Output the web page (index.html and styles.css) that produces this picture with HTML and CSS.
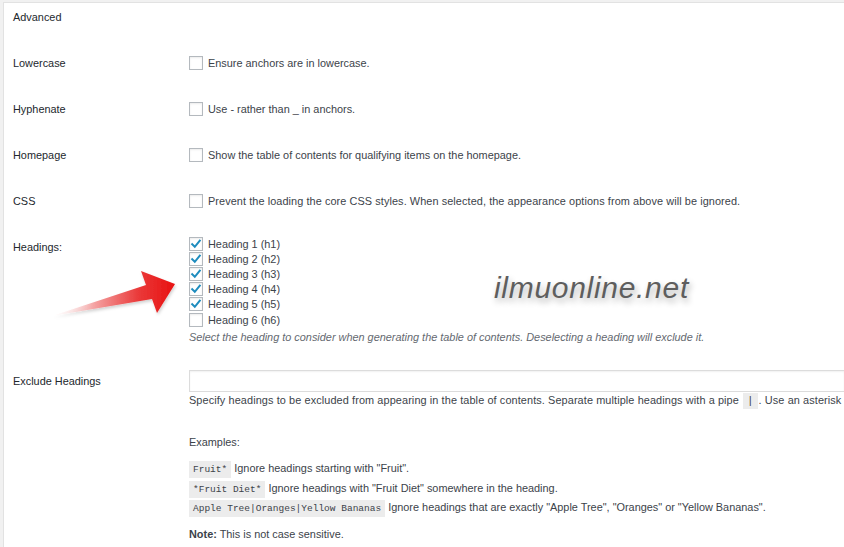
FILE: index.html
```html
<!DOCTYPE html>
<html lang="en">
<head>
<meta charset="utf-8">
<title>Advanced settings</title>
<link rel="stylesheet" href="styles.css">
</head>
<body>
<div class="box">
  <div class="section-title">Advanced</div>

  <div class="row">
    <div class="label">Lowercase</div>
    <div class="field"><span class="cb"></span><span>Ensure anchors are in lowercase.</span></div>
  </div>
  <div class="row">
    <div class="label">Hyphenate</div>
    <div class="field"><span class="cb"></span><span>Use - rather than _ in anchors.</span></div>
  </div>
  <div class="row">
    <div class="label">Homepage</div>
    <div class="field"><span class="cb"></span><span>Show the table of contents for qualifying items on the homepage.</span></div>
  </div>
  <div class="row">
    <div class="label">CSS</div>
    <div class="field"><span class="cb"></span><span class="wide">Prevent the loading the core CSS styles. When selected, the appearance options from above will be ignored.</span></div>
  </div>

  <div class="row-headings">
    <div class="label label-headings">Headings:</div>
    <div class="field-col">
      <ul class="heading-list">
        <li><span class="cb cb-small checked"><svg viewBox="0 0 12 12"><path d="M2.2 6.2 L4.8 8.8 L9.8 2.6" /></svg></span>Heading 1 (h1)</li>
        <li><span class="cb cb-small checked"><svg viewBox="0 0 12 12"><path d="M2.2 6.2 L4.8 8.8 L9.8 2.6" /></svg></span>Heading 2 (h2)</li>
        <li><span class="cb cb-small checked"><svg viewBox="0 0 12 12"><path d="M2.2 6.2 L4.8 8.8 L9.8 2.6" /></svg></span>Heading 3 (h3)</li>
        <li><span class="cb cb-small checked"><svg viewBox="0 0 12 12"><path d="M2.2 6.2 L4.8 8.8 L9.8 2.6" /></svg></span>Heading 4 (h4)</li>
        <li><span class="cb cb-small checked"><svg viewBox="0 0 12 12"><path d="M2.2 6.2 L4.8 8.8 L9.8 2.6" /></svg></span>Heading 5 (h5)</li>
        <li><span class="cb cb-small"></span>Heading 6 (h6)</li>
      </ul>
      <p class="description">Select the heading to consider when generating the table of contents. Deselecting a heading will exclude it.</p>
    </div>
  </div>

  <div class="row-exclude">
    <div class="label label-exclude">Exclude Headings</div>
    <div class="field-col">
      <div class="text-input"></div>
      <p class="help">Specify headings to be excluded from appearing in the table of contents. Separate multiple headings with a pipe <code>|</code>. Use an asterisk</p>
      <p class="examples-title">Examples:</p>
      <ul class="examples">
        <li><code>Fruit*</code> Ignore headings starting with "Fruit".</li>
        <li><code>*Fruit Diet*</code> Ignore headings with "Fruit Diet" somewhere in the heading.</li>
        <li><code>Apple Tree|Oranges|Yellow Bananas</code> Ignore headings that are exactly "Apple Tree", "Oranges" or "Yellow Bananas".</li>
      </ul>
      <p class="note"><strong>Note:</strong> This is not case sensitive.</p>
    </div>
  </div>

  <svg class="arrow" width="136" height="56" viewBox="0 0 136 56">
    <defs>
      <linearGradient id="ag" x1="0" y1="0" x2="1" y2="0">
        <stop offset="0" stop-color="#ffffff" stop-opacity="0.2"/>
        <stop offset="0.35" stop-color="#f4a0a0"/>
        <stop offset="0.7" stop-color="#ea3a3a"/>
        <stop offset="1" stop-color="#e81010"/>
      </linearGradient>
      <filter id="as" x="-10%" y="-20%" width="130%" height="150%">
        <feDropShadow dx="1" dy="2" stdDeviation="1.5" flood-color="#000" flood-opacity="0.18"/>
      </filter>
    </defs>
    <polygon points="2,50 96,19 91,5 125,18 107,47 102,33" fill="url(#ag)" filter="url(#as)"/>
  </svg>

  <div class="watermark">ilmuonline.net</div>
</div>
</body>
</html>
```

FILE: styles.css
```css
html, body {
  margin: 0;
  padding: 0;
}

body {
  background: #f1f1f1;
  padding: 2px 0 0 3px;
  width: 844px;
  height: 547px;
  box-sizing: border-box;
  overflow: hidden;
  font-family: "Liberation Sans", Arial, sans-serif;
  font-size: 10.9px;
  color: #2c3338;
}

.box {
  position: relative;
  background: #fff;
  border-top: 1px solid #e2e2e2;
  border-left: 1px solid #e2e2e2;
  padding-left: 9px;
  height: 545px;
  box-sizing: border-box;
  overflow: hidden;
  white-space: nowrap;
}

.section-title {
  height: 37px;
  box-sizing: border-box;
  padding-top: 4px;
  line-height: 20px;
  color: #23282d;
}

.row {
  display: grid;
  grid-template-columns: 176px 1fr;
  align-items: center;
  height: 46px;
}

.label {
  color: #23282d;
  line-height: 20px;
}

.field {
  display: flex;
  align-items: center;
  gap: 5px;
  color: #3c434a;
}

.wide {
  letter-spacing: 0.08px;
}

.cb {
  display: inline-block;
  width: 12px;
  height: 12px;
  border: 1px solid #b4b9be;
  background: #fff;
  box-shadow: inset 0 1px 2px rgba(0, 0, 0, 0.08);
  flex: none;
}

.cb svg {
  display: block;
  width: 12px;
  height: 12px;
}

.cb svg path {
  fill: none;
  stroke: #1e8cbe;
  stroke-width: 2;
  stroke-linecap: square;
}

.row-headings {
  display: grid;
  grid-template-columns: 176px 1fr;
  height: 124px;
}

.label-headings {
  padding-top: 13px;
}

.field-col {
  display: flex;
  flex-direction: column;
  min-width: 0;
}

.heading-list {
  list-style: none;
  margin: 0;
  padding: 12px 0 0;
}

.heading-list li {
  display: flex;
  align-items: center;
  gap: 5px;
  height: 15.2px;
  color: #3c434a;
}

.description {
  margin: 0;
  line-height: 20px;
  font-style: italic;
  color: #646970;
}

.row-exclude {
  display: grid;
  grid-template-columns: 176px 1fr;
  padding-top: 22px;
}

.label-exclude {
  line-height: 22px;
}

.text-input {
  height: 20px;
  border: 1px solid #dcdcdc;
  border-right: none;
  box-shadow: inset 0 1px 2px rgba(0, 0, 0, 0.06);
  background: #fff;
}

.help {
  margin: 0;
  height: 16px;
  line-height: 16px;
  letter-spacing: 0.1px;
  color: #3c434a;
}

code {
  font-family: "Liberation Mono", "Courier New", monospace;
  font-size: 9.5px;
  line-height: 1;
  letter-spacing: 0;
  background: #ececec;
  padding: 3px 4px;
}

.help code {
  font-size: 10.9px;
  padding: 2px 4px;
  margin: 0 1px;
}

.examples-title {
  margin: 26px 0 0;
  height: 16px;
  line-height: 16px;
  color: #3c434a;
}

.examples {
  list-style: none;
  margin: 9px 0 0;
  padding: 0;
}

.examples li {
  height: 19.5px;
  line-height: 19.5px;
  color: #3c434a;
}

.note {
  margin: 8px 0 0;
  height: 16px;
  line-height: 16px;
  color: #3c434a;
}

.note strong {
  font-weight: 600;
}

.arrow {
  position: absolute;
  left: 46px;
  top: 263px;
}

.watermark {
  position: absolute;
  left: 490px;
  top: 268px;
  font-family: "Liberation Sans", sans-serif;
  font-style: italic;
  font-size: 30px;
  letter-spacing: 0.7px;
  color: #5e5e5e;
  text-shadow: 2px 4px 6px rgba(0, 0, 0, 0.3);
}
```
